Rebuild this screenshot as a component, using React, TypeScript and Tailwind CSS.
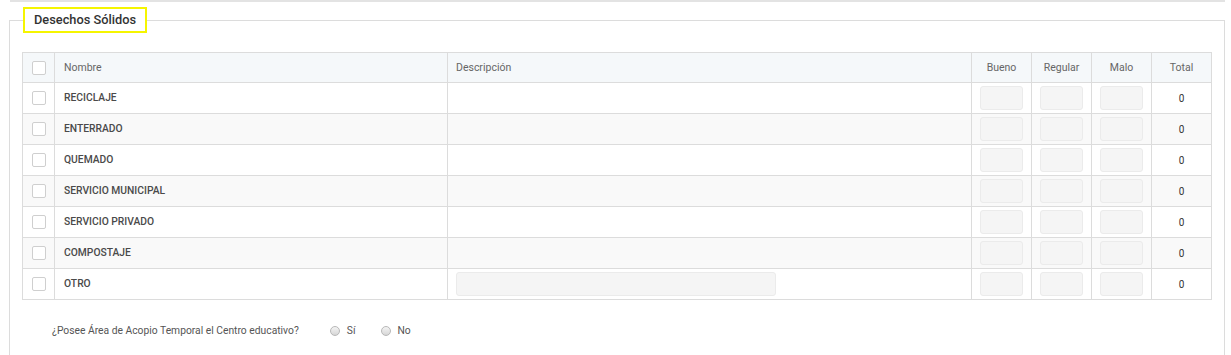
import React from "react";

const rows = [
    "RECICLAJE",
    "ENTERRADO",
    "QUEMADO",
    "SERVICIO MUNICIPAL",
    "SERVICIO PRIVADO",
    "COMPOSTAJE",
    "OTRO",
];

const Checkbox = () => (
    <span className="block w-[14px] h-[14px] border border-[#cfcfcf] rounded-[2px] bg-white ml-[9px]" />
);

const Radio = () => (
    <span className="inline-block w-[10px] h-[10px] rounded-full border border-[#b8b8b8] bg-gradient-to-b from-[#f4f4f4] to-[#d6d6d6]" />
);

const NumInput = () => (
    <span className="block w-[43px] h-[24px] mx-auto bg-[#f5f5f5] border border-[#ebebeb] rounded-[3px]" />
);

const App = () => {
    return (
        <div className="w-[1231px] h-[355px] bg-white overflow-hidden font-['Roboto',sans-serif]">
            <div className="ml-[10px] mr-[6px] h-[2px] bg-[#e3e3e3]" />
            <fieldset className="ml-[9px] mt-[5px] w-[1216px] border border-[#dcdcdc] px-3 pb-10">
                <legend className="ml-[1px] h-[26px] border-2 border-[#f5f500] px-[9px] leading-[22px] whitespace-nowrap text-[12.8px] font-medium text-[#333]">
                    Desechos Sólidos
                </legend>

                <table className="mt-[19px] w-[1189px] table-fixed border-collapse text-[10.5px]">
                    <colgroup>
                        <col className="w-[32px]" />
                        <col className="w-[393px]" />
                        <col className="w-[524px]" />
                        <col className="w-[60px]" />
                        <col className="w-[60px]" />
                        <col className="w-[60px]" />
                        <col className="w-[60px]" />
                    </colgroup>
                    <thead>
                        <tr className="h-[30px] bg-[#f5f8fa] text-[#666]">
                            <th className="border border-[#dcdcdc] p-0">
                                <Checkbox />
                            </th>
                            <th className="border border-[#dcdcdc] px-[9px] text-left font-normal">Nombre</th>
                            <th className="border border-[#dcdcdc] px-[8px] text-left font-normal">Descripción</th>
                            <th className="border border-[#dcdcdc] text-center font-normal">Bueno</th>
                            <th className="border border-[#dcdcdc] text-center font-normal">Regular</th>
                            <th className="border border-[#dcdcdc] text-center font-normal">Malo</th>
                            <th className="border border-[#dcdcdc] text-center font-normal">Total</th>
                        </tr>
                    </thead>
                    <tbody>
                        {rows.map((name, i) => (
                            <tr key={name} className={`h-[31px] ${i % 2 === 1 ? "bg-[#f9f9f9]" : "bg-white"}`}>
                                <td className="border border-[#dcdcdc] p-0">
                                    <Checkbox />
                                </td>
                                <td className="border border-[#dcdcdc] px-[9px] text-[10.3px] font-medium text-[#4a4a4a]">{name}</td>
                                <td className="border border-[#dcdcdc] px-[8px]">
                                    {name === "OTRO" && (
                                        <span className="block w-[320px] h-[24px] bg-[#f5f5f5] border border-[#ebebeb] rounded-[3px]" />
                                    )}
                                </td>
                                <td className="border border-[#dcdcdc] p-0">
                                    <NumInput />
                                </td>
                                <td className="border border-[#dcdcdc] p-0">
                                    <NumInput />
                                </td>
                                <td className="border border-[#dcdcdc] p-0">
                                    <NumInput />
                                </td>
                                <td className="border border-[#dcdcdc] text-center text-[10px] text-[#333]">0</td>
                            </tr>
                        ))}
                    </tbody>
                </table>

                <div className="mt-[23px] pl-[30px] flex items-center text-[10.3px] text-[#555]">
                    <span>¿Posee Área de Acopio Temporal el Centro educativo?</span>
                    <label className="ml-[31px] flex items-center gap-[7px]">
                        <Radio />
                        <span>Sí</span>
                    </label>
                    <label className="ml-[26px] flex items-center gap-[6px]">
                        <Radio />
                        <span>No</span>
                    </label>
                </div>
            </fieldset>
        </div>
    );
};

export default App;
